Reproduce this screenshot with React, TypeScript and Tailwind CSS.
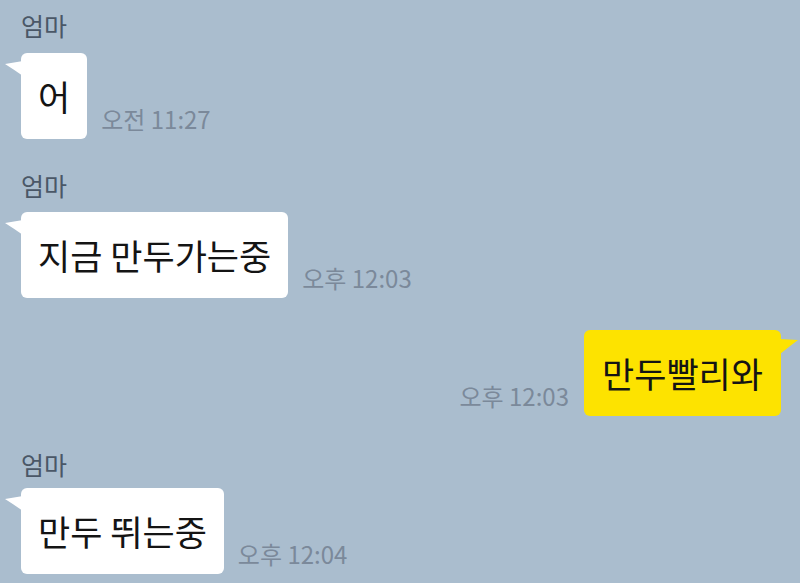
const FONT = "font-['Noto_Sans_CJK_KR','Noto_Sans',sans-serif]";

function Tail({ side, color }: { side: "left" | "right"; color: string }) {
    if (side === "left") {
        return (
            <svg
                className="absolute left-[-16px] top-[8px]"
                width="18"
                height="16"
                viewBox="0 0 18 16">
                <path d="M18 0 L0 3 Q8 8 18 15 Z" fill={color} />
            </svg>
        );
    }
    return (
        <svg
            className="absolute right-[-17px] top-[9px]"
            width="18"
            height="16"
            viewBox="0 0 18 16">
            <path d="M0 0 L18 1 Q10 7 0 15 Z" fill={color} />
        </svg>
    );
}

function Name() {
    return (
        <div className="text-[25px] leading-[30px] text-[#4a5767]">
            엄마
        </div>
    );
}

function Time({ children }: { children: string }) {
    return (
        <span className="text-[24px] leading-[28px] text-[#7b899a] mb-[6px] whitespace-nowrap">
            {children}
        </span>
    );
}

function Incoming({ text, time }: { text: string; time: string }) {
    return (
        <div className="flex items-end gap-[14px]">
            <div className="relative bg-white rounded-[6px] px-[17px] py-[18px] text-[35px] leading-[50px] text-[#141414]">
                <Tail side="left" color="#ffffff" />
                {text}
            </div>
            <Time>{time}</Time>
        </div>
    );
}

export default function App() {
    return (
        <div
            className={`${FONT} w-[800px] h-[583px] overflow-hidden bg-[#aabdce] pt-[10px] pl-[21px] pr-[19px] flex flex-col`}>
            <Name />
            <div className="mt-[13px]">
                <Incoming text="어" time="오전 11:27" />
            </div>

            <div className="mt-[31px]">
                <Name />
            </div>
            <div className="mt-[12px]">
                <Incoming text="지금 만두가는중" time="오후 12:03" />
            </div>

            {/* my message */}
            <div className="mt-[32px] flex items-end justify-end gap-[15px]">
                <Time>오후 12:03</Time>
                <div className="relative bg-[#fde300] rounded-[6px] px-[18px] py-[18px] text-[35px] leading-[50px] text-[#141414]">
                    <Tail side="right" color="#fde300" />
                    만두빨리와
                </div>
            </div>

            <div className="mt-[33px]">
                <Name />
            </div>
            <div className="mt-[9px]">
                <Incoming text="만두 뛰는중" time="오후 12:04" />
            </div>
        </div>
    );
}
